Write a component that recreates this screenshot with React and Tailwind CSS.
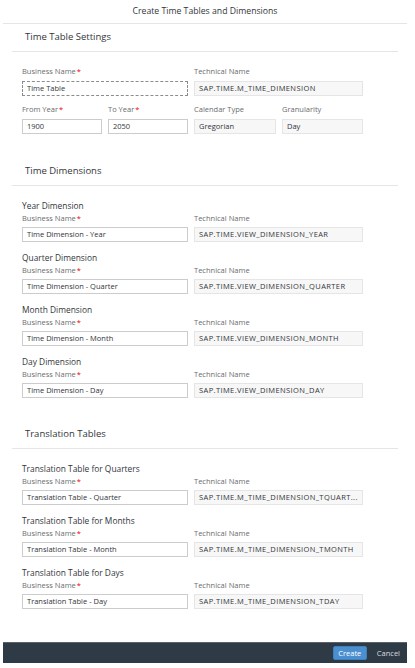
import React from 'react';

const Label = ({ children, required }) => (
  <div className="h-[12px] leading-[12px] text-[7.5px] text-[#6a6d70] whitespace-nowrap">
    {children}
    {required && <span className="text-[#e00] ml-[1px]">*</span>}
  </div>
);

const Field = ({ value, readOnly, focused, wide, className = '' }) => (
  <div
    className={`h-[15px] px-[4px] text-[7.5px] leading-[13px] text-[#32363a] whitespace-nowrap overflow-hidden border ${
      wide ? 'tracking-[0.4px]' : ''
    } ${
      readOnly
        ? 'bg-[#f7f7f7] border-[#e5e5e5]'
        : focused
        ? 'bg-white border-dashed border-[#8c8c8c]'
        : 'bg-white border-[#cccccc]'
    } ${className}`}
  >
    {value}
  </div>
);

const SectionHeading = ({ children, className = '' }) => (
  <div
    className={`mx-[9px] h-[28px] border-b border-[#e5e5e5] flex items-center pl-[13px] text-[9.5px] text-[#32363a] ${className}`}
  >
    {children}
  </div>
);

const NameGroup = ({ title, business, technical, last }) => (
  <div className={last ? '' : 'mb-[10px]'}>
    <div className="h-[12px] leading-[12px] text-[8.4px] text-[#32363a]">{title}</div>
    <div className="flex gap-[6px]">
      <div className="w-[166px]">
        <Label required>Business Name</Label>
        <Field className="mt-[3px]" value={business} />
      </div>
      <div className="w-[169px]">
        <Label>Technical Name</Label>
        <Field className="mt-[3px]" value={technical} readOnly wide />
      </div>
    </div>
  </div>
);

const dimensions = [
  { title: 'Year Dimension', business: 'Time Dimension - Year', technical: 'SAP.TIME.VIEW_DIMENSION_YEAR' },
  { title: 'Quarter Dimension', business: 'Time Dimension - Quarter', technical: 'SAP.TIME.VIEW_DIMENSION_QUARTER' },
  { title: 'Month Dimension', business: 'Time Dimension - Month', technical: 'SAP.TIME.VIEW_DIMENSION_MONTH' },
  { title: 'Day Dimension', business: 'Time Dimension - Day', technical: 'SAP.TIME.VIEW_DIMENSION_DAY' },
];

const translations = [
  { title: 'Translation Table for Quarters', business: 'Translation Table - Quarter', technical: 'SAP.TIME.M_TIME_DIMENSION_TQUART...' },
  { title: 'Translation Table for Months', business: 'Translation Table - Month', technical: 'SAP.TIME.M_TIME_DIMENSION_TMONTH' },
  { title: 'Translation Table for Days', business: 'Translation Table - Day', technical: 'SAP.TIME.M_TIME_DIMENSION_TDAY' },
];

export default function App() {
  return (
    <div className="h-[668px] w-[415px] bg-white overflow-hidden font-['Open_Sans',sans-serif]">
      <div className="mx-[3px] w-[404px] h-[663px] flex flex-col bg-white">
        {/* Header */}
        <div className="h-[24px] shrink-0 border-b border-[#e5e5e5] flex items-center justify-center pt-[1px] text-[8.7px] text-[#32363a]">
          Create Time Tables and Dimensions
        </div>

        {/* Time Table Settings */}
        <SectionHeading>Time Table Settings</SectionHeading>
        <div className="pl-[19px] pt-[13px]">
          <div className="flex gap-[6px]">
            <div className="w-[166px]">
              <Label required>Business Name</Label>
              <Field className="mt-[4px]" value="Time Table" focused />
            </div>
            <div className="w-[169px]">
              <Label>Technical Name</Label>
              <Field className="mt-[4px]" value="SAP.TIME.M_TIME_DIMENSION" readOnly wide />
            </div>
          </div>
          <div className="flex gap-[6px] mt-[7px]">
            <div className="w-[80px]">
              <Label required>From Year</Label>
              <Field className="mt-[4px]" value="1900" />
            </div>
            <div className="w-[80px]">
              <Label required>To Year</Label>
              <Field className="mt-[4px]" value="2050" />
            </div>
            <div className="w-[82px]">
              <Label>Calendar Type</Label>
              <Field className="mt-[4px]" value="Gregorian" readOnly />
            </div>
            <div className="w-[81px]">
              <Label>Granularity</Label>
              <Field className="mt-[4px]" value="Day" readOnly />
            </div>
          </div>
        </div>

        {/* Time Dimensions */}
        <SectionHeading className="mt-[24px]">Time Dimensions</SectionHeading>
        <div className="pl-[19px] pt-[14px]">
          {dimensions.map((d, i) => (
            <NameGroup key={d.title} {...d} last={i === dimensions.length - 1} />
          ))}
        </div>

        {/* Translation Tables */}
        <SectionHeading className="mt-[23px]">Translation Tables</SectionHeading>
        <div className="pl-[19px] pt-[14px]">
          {translations.map((d, i) => (
            <NameGroup key={d.title} {...d} last={i === translations.length - 1} />
          ))}
        </div>

        {/* Footer */}
        <div className="mt-auto h-[21px] shrink-0 bg-[#2e3a46] border-t border-[#56626d] flex items-center justify-end pr-[7px] gap-[10px]">
          <button className="h-[14px] w-[34px] rounded-[2px] bg-[#4a8fd0] border border-[#3f7fbd] text-white text-[7.5px] leading-[12px]">
            Create
          </button>
          <button className="text-[7.5px] text-[#d6dbe0] leading-[12px]">Cancel</button>
        </div>
      </div>
    </div>
  );
}
